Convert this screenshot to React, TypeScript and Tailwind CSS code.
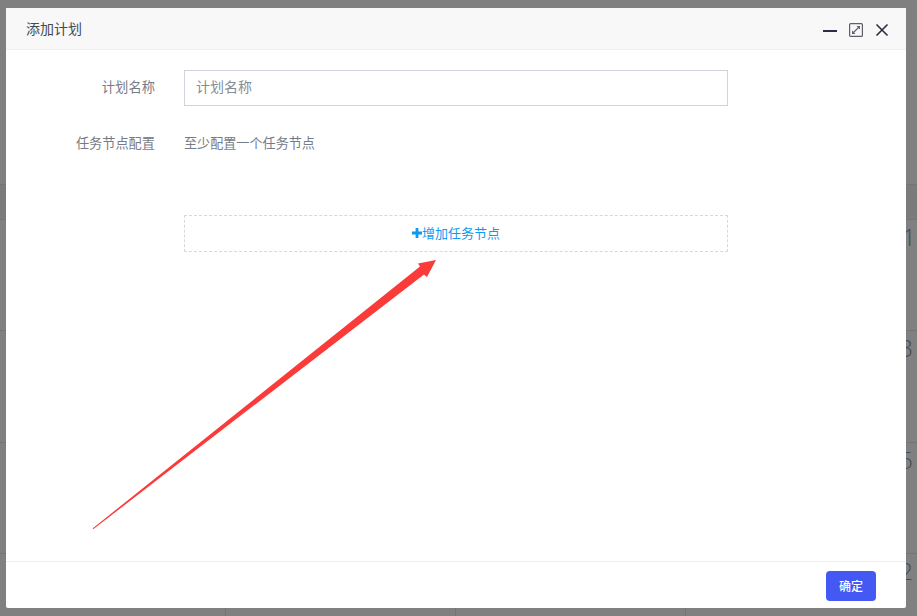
const font = { fontFamily: '"Microsoft YaHei","Noto Sans CJK SC","Liberation Sans",sans-serif' };

function Arrow() {
  return (
    <svg className="absolute left-0 top-0 pointer-events-none" width="917" height="616" viewBox="0 0 917 616">
      <polygon points="92.5,528.5 420,266.5 418,263.5 436,260 427,277 424,274.5 93.5,529" fill="#fb3a3a" />
    </svg>
  );
}

function Row({ digit, nudge }: { digit: string; nudge: string }) {
  return (
    <div className="h-[111.3px] border-b border-[#757575] flex">
      <div className="w-[226px] h-full border-r border-[#757575]" />
      <div className="w-[230px] h-full border-r border-[#757575]" />
      <div className="w-[230px] h-full border-r border-[#757575]" />
      <div className={`flex-1 h-full flex justify-end items-start pt-[2px] ${nudge}`}>
        <span className="text-[24px] leading-[30px] text-[#434a55] font-light" style={{ fontFamily: '"Open Sans",sans-serif' }}>{digit}</span>
      </div>
    </div>
  );
}

export default function App() {
  return (
    <div className="relative w-[917px] h-[616px] overflow-hidden bg-[#808080]" style={font}>
      <div className="pt-[184px]">
        <div className="h-[36px] bg-[#7b7b7b] border-y border-[#757575]" />
        <div className="flex flex-col">
          <Row digit="1" nudge="pr-[1px]" />
          <Row digit="3" nudge="pr-[4px]" />
          <Row digit="5" nudge="pr-[4px]" />
          <Row digit="2" nudge="pr-[4px]" />
        </div>
      </div>

      <div className="absolute left-[6px] top-[8px] w-[900px] h-[600px] bg-white flex flex-col rounded-[2px]">
        <div className="h-[42px] shrink-0 bg-[#f8f8f8] border-b border-[#eeeeee] flex items-center justify-between pl-[20px] pr-[17px]">
          <span className="text-[14px] text-[#444a52]">添加计划</span>
          <div className="flex items-center gap-[12px] mt-[2px]">
            <svg width="14" height="14" viewBox="0 0 14 14"><rect x="0" y="7" width="14" height="2" fill="#2b2d42" /></svg>
            <svg width="14" height="14" viewBox="0 0 14 14" fill="none">
              <rect x="0.6" y="0.6" width="12.8" height="12.8" rx="1" stroke="#5e6068" strokeWidth="1.2" />
              <path d="M4.5 9.5 L9.5 4.5" stroke="#5e6068" strokeWidth="1.1" />
              <path d="M7.5 3 H11 V6.5Z M3 7.5 V11 H6.5Z" fill="#5e6068" />
            </svg>
            <svg width="14" height="14" viewBox="0 0 14 14" fill="none"><path d="M1.5 1.5 L12.5 12.5 M12.5 1.5 L1.5 12.5" stroke="#2b2d42" strokeWidth="1.6" /></svg>
          </div>
        </div>

        <div className="flex-1 pt-[20px]">
          <div className="flex">
            <label className="w-[149px] text-right text-[13.3px] leading-[34px] text-[#757c85]">计划名称</label>
            <div className="ml-[29px] w-[544px] h-[36px] border border-[#d0d5dd] flex items-center pl-[11px] pb-[3px] text-[14px] text-[#868c94]">计划名称</div>
          </div>
          <div className="flex mt-[20px]">
            <label className="w-[149px] text-right text-[13.2px] leading-[34px] text-[#757c85]">任务节点配置</label>
            <div className="ml-[29px] text-[13.1px] leading-[34px] text-[#757c85]">至少配置一个任务节点</div>
          </div>
          <div className="ml-[178px] mt-[55px] w-[544px] h-[37px] border border-dashed border-[#d5d8dc] flex items-center justify-center pb-[2px] text-[13px] text-[#0d9bf2]">
            <svg width="10" height="10" viewBox="0 0 10 10" className="mt-[1px]"><path d="M3.6 0H6.4V3.6H10V6.4H6.4V10H3.6V6.4H0V3.6H3.6Z" fill="#0d9bf2" /></svg>
            <span>增加任务节点</span>
          </div>
        </div>

        <div className="h-[47px] shrink-0 border-t border-[#eeeeee] flex justify-end items-start pt-[9px] pr-[30px]">
          <button className="w-[50px] h-[30px] rounded-[4px] bg-[#4458f3] text-white text-[12px] font-medium">确定</button>
        </div>
      </div>
      <Arrow />
    </div>
  );
}
